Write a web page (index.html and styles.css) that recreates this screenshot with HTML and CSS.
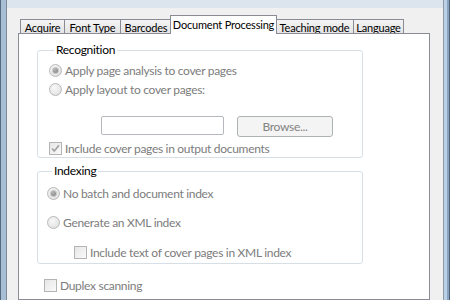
FILE: index.html
```html
<!DOCTYPE html>
<html lang="en">
<head>
  <meta charset="UTF-8">
  <title>Document Processing</title>
  <link rel="stylesheet" href="styles.css">
</head>
<body>

<div class="window">
  <div class="tabs">
    <div class="tab acquire">Acquire</div>
    <div class="tab font-type">Font Type</div>
    <div class="tab barcodes">Barcodes</div>
    <div class="tab active">Document Processing</div>
    <div class="tab teaching">Teaching mode</div>
    <div class="tab language">Language</div>
  </div>

  <div class="panel">
    <fieldset class="group recognition">
      <legend>Recognition</legend>
      <div class="option"><span class="radio checked"></span>Apply page analysis to cover pages</div>
      <div class="option"><span class="radio"></span>Apply layout to cover pages:</div>
      <div class="file-row">
        <span class="textbox"></span>
        <span class="button">Browse...</span>
      </div>
      <div class="option last">
        <span class="check checked">
          <svg width="11" height="11" viewBox="0 0 11 11"><path d="M2 5.5 L4.3 8 L9 2.3" fill="none" stroke="#a0a0a0" stroke-width="1.6"/></svg>
        </span>Include cover pages in output documents
      </div>
    </fieldset>

    <fieldset class="group indexing">
      <legend>Indexing</legend>
      <div class="option"><span class="radio checked"></span>No batch and document index</div>
      <div class="option spaced"><span class="radio"></span>Generate an XML index</div>
      <div class="option spaced nested"><span class="check"></span>Include text of cover pages in XML index</div>
    </fieldset>

    <div class="option duplex"><span class="check"></span>Duplex scanning</div>
  </div>
</div>

</body>
</html>
```

FILE: styles.css
```css
html, body {
  margin: 0;
  height: 300px;
  overflow: hidden;
}

body {
  font-family: Lato, "Open Sans", sans-serif;
  font-size: 12px;
  letter-spacing: -0.3px;
  color: #000;
  background:
    linear-gradient(to right, #55697f 0 1px, #a8bed5 1px 6px, #7d8a98 6px 7px, transparent 7px),
    linear-gradient(to left, #4d627a 0 1px, #8aa4bf 1px 3px, #b9d0e6 3px 6px, #8f9aa5 6px 7px, transparent 7px),
    #dce5ee;
}

.window {
  margin: 8px 7px 0 7px;
  height: 292px;
  background: #f0f0f0;
  display: flex;
  flex-direction: column;
}

/* tab strip */
.tabs {
  display: flex;
  align-items: flex-end;
  padding: 7px 0 0 13px;
  height: 18px;
  font-size: 11px;
  letter-spacing: -0.2px;
}

.tab {
  box-sizing: border-box;
  height: 14px;
  line-height: 15px;
  padding: 0;
  border: 1px solid #898c95;
  border-bottom: none;
  margin-left: -1px;
  background: linear-gradient(#f4f4f4, #e4e4e4);
  white-space: nowrap;
  text-align: center;
}

.tab.acquire { width: 45px; margin-left: 0; }
.tab.font-type { width: 57px; }
.tab.barcodes { width: 52px; }
.tab.teaching { width: 79px; }
.tab.language { width: 51px; }

.tab.active {
  width: 107px;
  height: 19px;
  line-height: 17px;
  background: #fff;
  margin: 0 -2px -1px -2px;
  position: relative;
  z-index: 1;
}

.tab.active + .tab {
  margin-left: 0;
}

/* page */
.panel {
  flex: 1;
  margin: 0 13px 0 11px;
  border: 1px solid #898c95;
  background: #fff;
  padding: 9px 0 0 18px;
}

.group {
  width: 326px;
  box-sizing: border-box;
  margin: 0;
  border: 1px solid #d5dfe5;
  border-radius: 3px;
  padding: 4px 0 0 11px;
}

.group legend {
  padding: 0 2px;
  margin-left: 5px;
  line-height: 14px;
}

.option {
  display: flex;
  align-items: center;
  height: 19px;
  color: #7c7c7c;
  white-space: nowrap;
}

.option.last {
  height: 18px;
}

.radio,
.check {
  width: 13px;
  height: 13px;
  box-sizing: border-box;
  margin-right: 3px;
  flex: none;
  display: flex;
  align-items: center;
  justify-content: center;
}

.radio {
  border-radius: 50%;
  border: 1px solid #b9b9b9;
  background: radial-gradient(circle at 40% 35%, #f8f8f8, #dcdcdc);
}

.radio.checked::after {
  content: "";
  width: 5px;
  height: 5px;
  border-radius: 50%;
  background: radial-gradient(circle at 40% 35%, #b8b8b8, #7a7a7a);
  box-shadow: 0 0 0 1px #c8c8c8;
}

.check {
  border: 1px solid #b4b4b4;
  background: linear-gradient(135deg, #e6e6e6, #fafafa);
}

.file-row {
  display: flex;
  margin: 17px 0 2px 52px;
}

.textbox {
  width: 123px;
  height: 19px;
  box-sizing: border-box;
  border: 1px solid #b5b9bd;
  border-radius: 2px;
  background: #fff;
}

.button {
  width: 96px;
  height: 21px;
  box-sizing: border-box;
  margin-left: 13px;
  border: 1px solid #adb2b5;
  border-radius: 3px;
  background: #f4f4f4;
  color: #838383;
  text-align: center;
  line-height: 19px;
}

.indexing {
  margin-top: 6px;
  padding: 5px 0 1px 9px;
}

.indexing .option {
  height: 20px;
}

.indexing .option.spaced {
  margin-top: 9px;
}

.indexing .option.nested {
  margin-top: 10px;
  padding-left: 27px;
}

.option.duplex {
  height: 20px;
  margin: 11px 0 0 7px;
}
```
